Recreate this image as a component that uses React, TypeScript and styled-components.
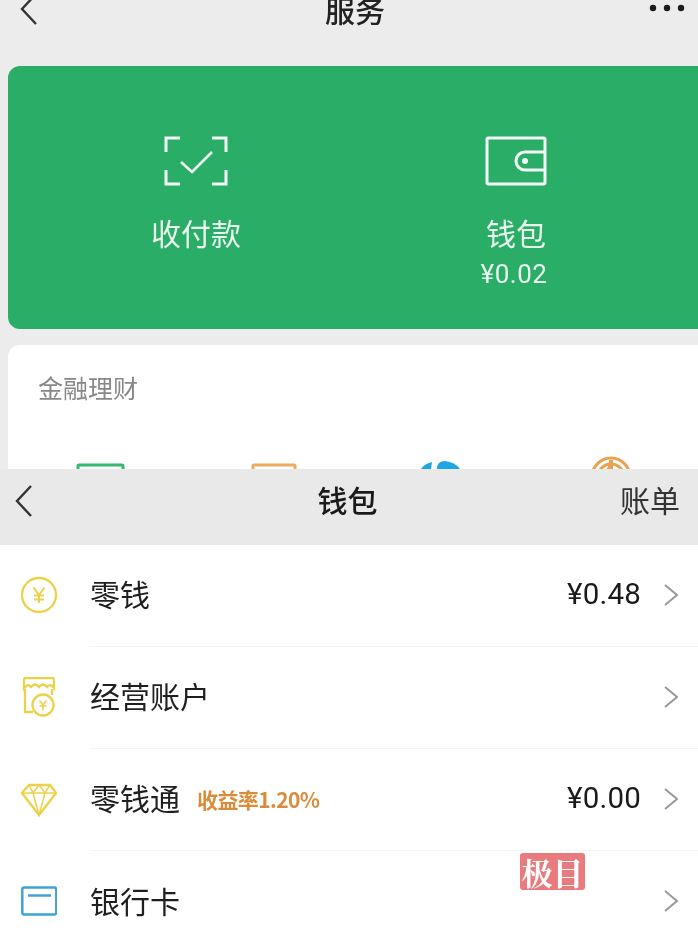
import React from 'react';
import styled, {createGlobalStyle} from 'styled-components';

const GlobalStyle = createGlobalStyle`
  html, body {
    margin: 0;
    background: #fff;
    overflow: hidden;
  }
  body {
    font-family: "Noto Sans CJK SC", "Noto Sans", sans-serif;
  }
`;

const Page = styled.div`
  width: 698px;
  height: 936px;
  overflow: hidden;
  display: flex;
  flex-direction: column;
  filter: blur(0.45px);
`;

const ServiceScreen = styled.section`
  height: 469px;
  flex: none;
  overflow: hidden;
  background: #ececec;
  padding-left: 8px;
  box-sizing: border-box;
`;

const ServiceNav = styled.header`
  height: 66px;
  margin-left: -8px;
  padding: 0 8px 0 20px;
  box-sizing: border-box;
  display: grid;
  grid-template-columns: 1fr auto 1fr;
  align-items: start;
`;

const BackIcon = styled.svg<{$top?: number}>`
  display: block;
  width: 18px;
  height: 32px;
  margin-top: ${p => p.$top ?? 0}px;
  fill: none;
  stroke: #333;
  stroke-width: 2.4;
`;

const ServiceTitle = styled.h1`
  margin: -9px 0 0;
  font-size: 30px;
  line-height: 36px;
  font-weight: 500;
  color: #222;
`;

const MoreDots = styled.svg`
  justify-self: end;
  width: 36px;
  height: 8px;
  margin: 4px 5px 0 0;
  fill: #1c1c1c;
`;

const GreenCard = styled.div`
  height: 263px;
  border-radius: 12px 0 0 12px;
  background: #2aad67;
  box-sizing: border-box;
  padding: 70px 0 0 28px;
  display: grid;
  grid-template-columns: 320px 320px;
  color: #e8f6ee;
`;

const PayItem = styled.div`
  display: flex;
  flex-direction: column;
  align-items: center;
`;

const PayIcon = styled.svg`
  width: 64px;
  height: 50px;
  fill: none;
  stroke: #f1faf5;
  stroke-width: 3;
`;

const PayLabel = styled.div`
  margin-top: 24px;
  font-size: 30px;
  line-height: 44px;
`;

const PayAmount = styled.div`
  font-family: Roboto, "Noto Sans", sans-serif;
  font-size: 26px;
  line-height: 34px;
  letter-spacing: 0.5px;
  margin: 3px 4px 0 0;
`;

const FinanceCard = styled.div`
  margin-top: 16px;
  height: 200px;
  border-radius: 12px 0 0 0;
  background: #fff;
  padding: 25px 0 0 30px;
  box-sizing: border-box;
`;

const FinanceTitle = styled.h2`
  margin: 0;
  font-size: 25px;
  line-height: 34px;
  font-weight: 400;
  color: #888;
`;

const FinanceIcons = styled.div`
  margin: 52px 0 0 32px;
  display: grid;
  grid-template-columns: 175px 166px 170px 60px;
`;

const FinanceIcon = styled.svg`
  width: 60px;
  height: 40px;
  fill: none;
`;

const WalletNav = styled.header`
  height: 76px;
  flex: none;
  background: #e9e9e9;
  padding: 0 18px 0 15px;
  box-sizing: border-box;
  display: grid;
  grid-template-columns: 1fr auto 1fr;
  align-items: center;
`;

const WalletTitle = styled.h1`
  margin: 0 0 16px;
  font-size: 30px;
  line-height: 40px;
  font-weight: 500;
  color: #1a1a1a;
`;

const BillLink = styled.a`
  justify-self: end;
  margin-bottom: 16px;
  font-size: 30px;
  line-height: 40px;
  color: #333;
`;

const List = styled.div`
  position: relative;
  flex: none;
  background: #fff;
`;

const Row = styled.div`
  height: 102px;
  display: flex;
  padding-left: 21px;
`;

const IconSlot = styled.div`
  width: 69px;
  flex: none;
  display: flex;
  align-items: center;
  padding-bottom: 2px;
`;

const RowIcon = styled.svg`
  width: 36px;
  height: 40px;
  fill: none;
  stroke: #ecd24a;
  stroke-width: 2.3;
`;

const BankIcon = styled(RowIcon)`
  stroke: #3fa3d6;
  stroke-width: 2.5;
`;

const RowBody = styled.div<{$last?: boolean}>`
  flex: 1;
  display: flex;
  align-items: center;
  padding: 0 20px 2px 0;
  box-sizing: border-box;
  border-bottom: ${p => (p.$last ? 'none' : '1px solid #f4f4f4')};
`;

const RowLabel = styled.span`
  margin-top: -3px;
  font-size: 30px;
  line-height: 40px;
  color: #1f1f1f;
`;

const YieldTag = styled.span`
  margin-left: 17px;
  font-size: 21px;
  line-height: 30px;
  font-weight: 700;
  letter-spacing: -0.6px;
  color: #d98d3c;
`;

const Amount = styled.span`
  margin: -2px 0 0 auto;
  font-family: Roboto, "Noto Sans", sans-serif;
  font-size: 29.5px;
  letter-spacing: 0.2px;
  color: #1a1a1a;
`;

const Chevron = styled.svg<{$alone?: boolean}>`
  width: 14px;
  height: 22px;
  flex: none;
  margin-left: ${p => (p.$alone ? 'auto' : '23px')};
  fill: none;
  stroke: #999;
  stroke-width: 2;
`;

const Watermark = styled.div`
  position: absolute;
  left: 520px;
  top: 308px;
  width: 65px;
  height: 37px;
  border-radius: 3px;
  background: #e97b7e;
  color: #fff;
  font-family: "Noto Serif CJK SC", "Noto Sans CJK SC", serif;
  font-size: 31px;
  line-height: 37px;
  font-weight: 700;
  text-align: center;
`;

const Back = ({top}: {top?: number}) => (
  <BackIcon $top={top} viewBox="0 0 18 32">
    <path d="M16 1 L2 16 L16 31" />
  </BackIcon>
);

const RowChevron = ({alone}: {alone?: boolean}) => (
  <Chevron $alone={alone} viewBox="0 0 14 22">
    <path d="M1 1 L13 11 L1 21" />
  </Chevron>
);

const ScanIcon = () => (
  <PayIcon viewBox="0 0 64 50">
    <path d="M16 2H2V16M48 2H62V16M2 34V48H16M62 34V48H48" />
    <path d="M17 26 L28 36 L48 16" strokeWidth="2.6" />
  </PayIcon>
);

const WalletIcon = () => (
  <PayIcon viewBox="0 0 64 50">
    <rect x="3" y="2" width="58" height="46" rx="1.5" />
    <path d="M61 16H41a9 9 0 0 0 0 18H61" />
    <circle cx="41" cy="25" r="3" fill="#f1faf5" stroke="none" />
  </PayIcon>
);

const CoinIcon = () => (
  <RowIcon viewBox="0 0 36 40">
    <circle cx="18" cy="20" r="17" />
    <path d="M12.500 12.500 L18 20 L23.500 12.500M18 20V28M13 20.500H23M13 24.500H23" strokeWidth="2" />
  </RowIcon>
);

const ShopIcon = () => (
  <RowIcon viewBox="0 0 36 40">
    <path d="M4 1H31a2 2 0 0 1 2 2V11q-3.500-5-7-1q-4-5-8 0q-4-5-8 0q-3.500-4-7 1V3A2 2 0 0 1 4 1Z" />
    <path d="M4 12V35H12M31 12V18" />
    <circle cx="22" cy="28" r="10.500" />
    <path d="M18.500 23.500 L22 28 L25.500 23.500M22 28V33.500M18.500 29H25.500" strokeWidth="1.600" />
  </RowIcon>
);

const DiamondIcon = () => (
  <RowIcon viewBox="0 0 36 40">
    <path d="M8 6H29L35 14L18 36L1 14Z" strokeWidth="2.400" />
    <path d="M1 14H35M12 14L18 36L24 14M8 6L12 14L18 6L24 14L29 6" strokeWidth="1.500" />
  </RowIcon>
);

const CardIcon = () => (
  <BankIcon viewBox="0 0 36 40">
    <rect x="1.300" y="6.500" width="34" height="27" rx="2" />
    <path d="M7 14.500H30" />
  </BankIcon>
);

const rows = [
  {label: '零钱', icon: <CoinIcon />, amount: '¥0.48'},
  {label: '经营账户', icon: <ShopIcon />},
  {label: '零钱通', icon: <DiamondIcon />, tag: '收益率1.20%', amount: '¥0.00'},
  {label: '银行卡', icon: <CardIcon />},
];

export default function App() {
  return (
    <Page>
      <GlobalStyle />
      <ServiceScreen>
        <ServiceNav>
          <Back top={-7} />
          <ServiceTitle>服务</ServiceTitle>
          <MoreDots viewBox="0 0 36 8">
            <circle cx="4" cy="4" r="3.200" />
            <circle cx="18" cy="4" r="3.200" />
            <circle cx="32" cy="4" r="3.200" />
          </MoreDots>
        </ServiceNav>
        <GreenCard>
          <PayItem>
            <ScanIcon />
            <PayLabel>收付款</PayLabel>
          </PayItem>
          <PayItem>
            <WalletIcon />
            <PayLabel>钱包</PayLabel>
            <PayAmount>¥0.02</PayAmount>
          </PayItem>
        </GreenCard>
        <FinanceCard>
          <FinanceTitle>金融理财</FinanceTitle>
          <FinanceIcons>
            <FinanceIcon viewBox="0 0 60 40">
              <rect x="8" y="9" width="45" height="30" rx="1" stroke="#35b86f" strokeWidth="3" />
            </FinanceIcon>
            <FinanceIcon viewBox="0 0 60 40">
              <rect x="8" y="9" width="42" height="30" rx="1" stroke="#eeaa5e" strokeWidth="3" />
            </FinanceIcon>
            <FinanceIcon viewBox="0 0 60 40">
              <path d="M10 13 Q13 8 21 6 L20 13 Z" fill="#1fa5e6" />
              <path d="M26 13 Q26 5 34 5 Q44 6 49 13 Z" fill="#1fa5e6" />
            </FinanceIcon>
            <FinanceIcon viewBox="0 0 60 40">
              <circle cx="30" cy="21" r="19" stroke="#e9a14f" strokeWidth="3" />
              <circle cx="30" cy="21" r="13" stroke="#e9a14f" strokeWidth="3" />
              <path d="M30 8 L26 18 M30 4V16" stroke="#e9a14f" strokeWidth="4" />
            </FinanceIcon>
          </FinanceIcons>
        </FinanceCard>
      </ServiceScreen>
      <WalletNav>
        <Back top={-12} />
        <WalletTitle>钱包</WalletTitle>
        <BillLink>账单</BillLink>
      </WalletNav>
      <List>
        {rows.map((row, i) => (
          <Row key={row.label}>
            <IconSlot>{row.icon}</IconSlot>
            <RowBody $last={i === rows.length - 1}>
              <RowLabel>{row.label}</RowLabel>
              {row.tag && <YieldTag>{row.tag}</YieldTag>}
              {row.amount && <Amount>{row.amount}</Amount>}
              <RowChevron alone={!row.amount} />
            </RowBody>
          </Row>
        ))}
        <Watermark>极目</Watermark>
      </List>
    </Page>
  );
}
